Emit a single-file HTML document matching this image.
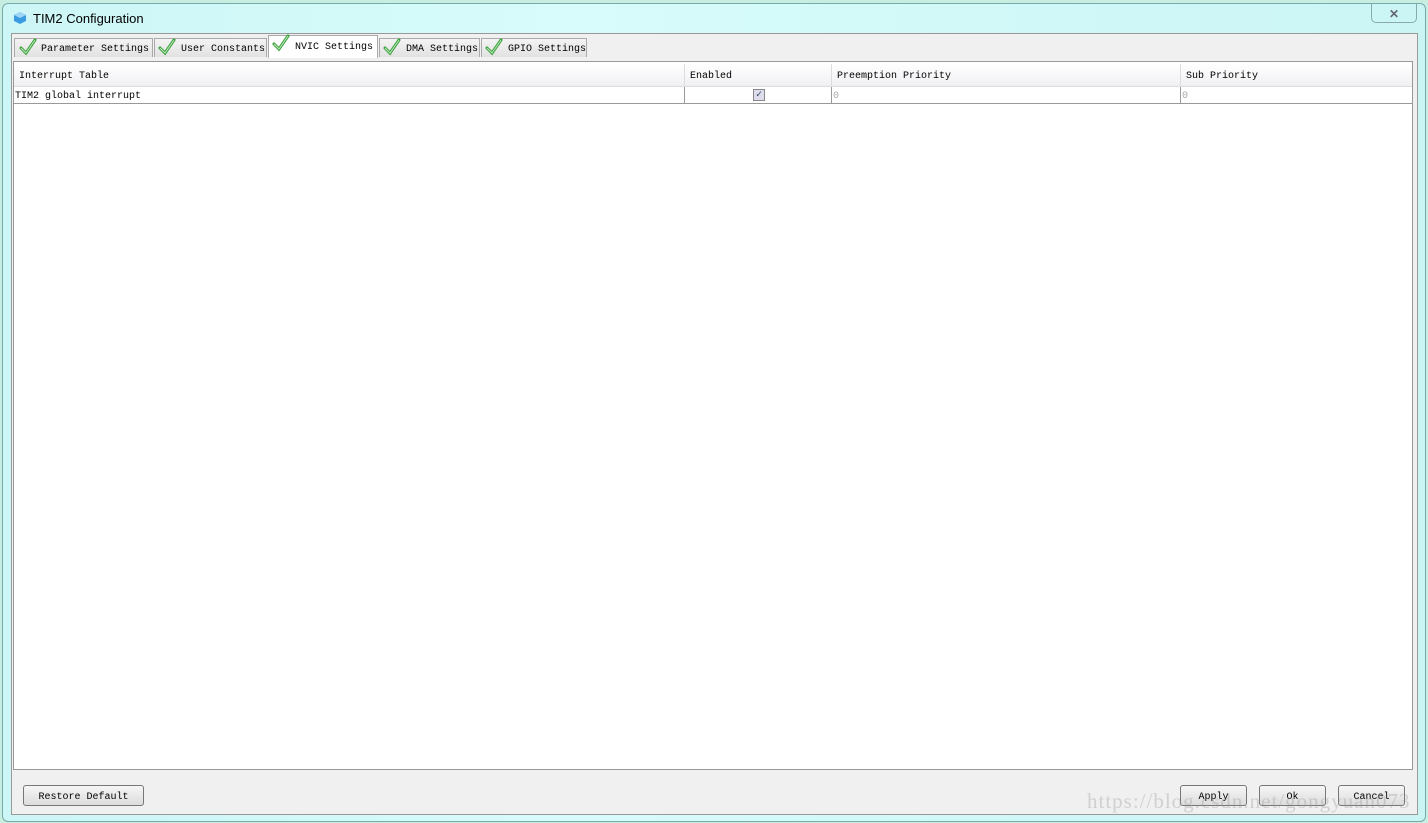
<!DOCTYPE html>
<html><head><style>
body{margin:0;width:1428px;height:823px;overflow:hidden;background:#c7eee0;font-family:"Liberation Mono",monospace;font-size:10px;color:#000;position:relative}
.win{position:absolute;left:2px;top:3px;width:1422px;height:817px;background:linear-gradient(90deg,#cdf6f6,#d8fbfb 40%,#cbf5f5);border:1px solid #7aa;border-radius:6px}
.title{position:absolute;left:33px;top:11px;font-family:"Liberation Sans",sans-serif;font-size:13px;color:#000}
.close{position:absolute;left:1371px;top:4px;width:44px;height:18px;border:1px solid #8aa;border-top:none;border-radius:0 0 5px 5px;text-align:center;font:bold 12px "Liberation Sans",sans-serif;color:#667;line-height:20px}
.panel{position:absolute;left:11px;top:33px;width:1405px;height:780px;background:#f0f0f0;border:1px solid #999}
.tab{position:absolute;top:38px;height:19px;border:1px solid #aaa;border-bottom:none;background:linear-gradient(#f4f4f4,#e2e2e2);line-height:22px;padding-left:26px;box-sizing:border-box}
.tab.act{top:35px;height:23px;background:#fff;line-height:24px}
.tbl{position:absolute;left:13px;top:61px;width:1400px;height:709px;background:#fff;border:1px solid #999;box-sizing:border-box}
.hdr{position:absolute;top:64px;height:23px;background:linear-gradient(#fff,#f0f0f3);border-bottom:1px solid #ddd;line-height:26px;padding-left:5px;box-sizing:border-box;border-left:1px solid #ddd}
.cell{position:absolute;top:87px;height:17px;line-height:19px;border-bottom:1px solid #999;border-left:1px solid #999;box-sizing:border-box;padding-left:1px}
.btn{position:absolute;top:785px;height:21px;border:1px solid #777;border-radius:3px;background:linear-gradient(#f6f6f6,#dcdcdc);text-align:center;line-height:23px;box-sizing:border-box}
</style></head><body>
<div class="win"></div>
<svg style="position:absolute;left:13px;top:11px" width="14" height="14"><polygon points="7,1 13,4 13,10 7,13 1,10 1,4" fill="#3b9be0"/><polygon points="7,1 13,4 7,7 1,4" fill="#9fd6f6"/></svg>
<div class="title">TIM2 Configuration</div>
<div class="close">✕</div>
<div class="panel"></div>
<div class="tab" style="left:14px;width:139px">Parameter Settings</div>
<div class="tab" style="left:154px;width:113px">User Constants</div>
<div class="tab act" style="left:268px;width:110px">NVIC Settings</div>
<div class="tab" style="left:379px;width:101px">DMA Settings</div>
<div class="tab" style="left:481px;width:106px">GPIO Settings</div>
<svg style="position:absolute;left:0;top:0" width="600" height="60">
<g fill="none" stroke="#3aa03a" stroke-width="3" stroke-linecap="round"><path d="M21 48l5 5 9-13"/><path d="M160 48l5 5 9-13"/><path d="M274 44l5 5 9-13"/><path d="M385 48l5 5 9-13"/><path d="M487 48l5 5 9-13"/></g>
<g fill="none" stroke="#bfeabf" stroke-width="1"><path d="M21 48l5 5 9-13"/><path d="M160 48l5 5 9-13"/><path d="M274 44l5 5 9-13"/><path d="M385 48l5 5 9-13"/><path d="M487 48l5 5 9-13"/></g>
</svg>
<div class="tbl"></div>
<div class="hdr" style="left:14px;width:671px;border-left:none">Interrupt Table</div>
<div class="hdr" style="left:684px;width:147px">Enabled</div>
<div class="hdr" style="left:831px;width:349px">Preemption Priority</div>
<div class="hdr" style="left:1180px;width:232px">Sub Priority</div>
<div class="cell" style="left:14px;width:671px;border-left:none">TIM2 global interrupt</div>
<div class="cell" style="left:684px;width:147px"><span style="position:absolute;left:68px;top:2px;width:12px;height:12px;border:1px solid #888;background:#dde;box-sizing:border-box;font-size:10px;line-height:11px;color:#345;text-align:center">✓</span></div>
<div class="cell" style="left:831px;width:349px;color:#aaa">0</div>
<div class="cell" style="left:1180px;width:232px;color:#aaa">0</div>
<div class="btn" style="left:23px;width:121px">Restore Default</div>
<div class="btn" style="left:1180px;width:67px">Apply</div>
<div class="btn" style="left:1259px;width:67px">Ok</div>
<div class="btn" style="left:1338px;width:67px">Cancel</div>
<div style="position:absolute;left:1087px;top:789px;font:21px 'Liberation Serif',serif;color:rgba(150,150,150,0.35);letter-spacing:1px">https://blog.csdn.net/gongyuan073</div>
</body></html>
